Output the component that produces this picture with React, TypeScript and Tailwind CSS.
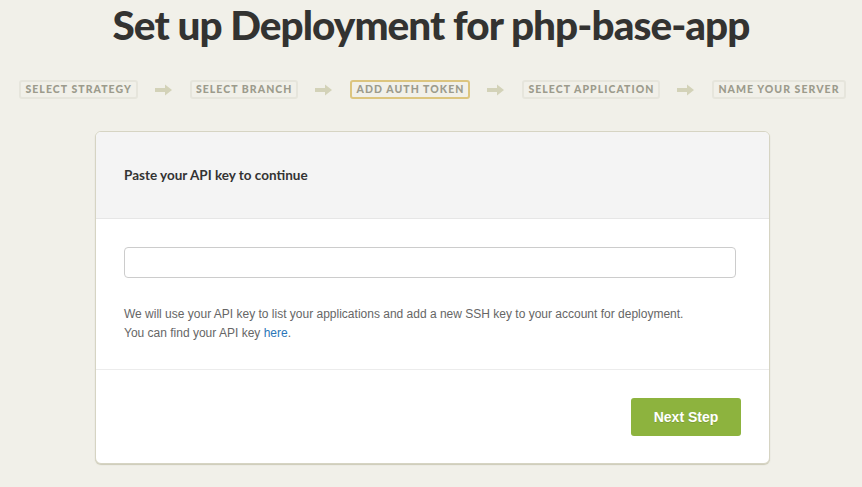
import React from "react";

const steps = [
  { label: "SELECT STRATEGY", active: false },
  { label: "SELECT BRANCH", active: false },
  { label: "ADD AUTH TOKEN", active: true },
  { label: "SELECT APPLICATION", active: false },
  { label: "NAME YOUR SERVER", active: false },
];

function Arrow() {
  return (
    <svg width="18" height="12" viewBox="0 0 18 12" className="shrink-0">
      <path d="M0 4 H10 V0.5 L17 6 L10 11.5 V8 H0 Z" fill="#d3d2b8" />
    </svg>
  );
}

export default function App() {
  return (
    <div
      className="min-h-[487px] w-full bg-[#f1f0e9] pt-[4px]"
      style={{ fontFamily: "Lato, 'Open Sans', sans-serif" }}
    >
      <h1 className="text-center text-[40.5px] font-black leading-[42px] tracking-[-0.95px] text-[#333331]">
        Set up Deployment for php-base-app
      </h1>
      <div className="mt-[34px] flex items-center justify-center gap-[17px] pl-[3px]">
        {steps.map((s, i) => (
          <React.Fragment key={s.label}>
            {i > 0 && <Arrow />}
            <div
              className={
                "flex h-[19px] items-center rounded-[3px] border-2 px-[4px] text-[10.5px] font-black tracking-[1.05px] text-[#9c9b8c] " +
                (s.active ? "border-[#dcc57f]" : "border-[#e6e5dc]")
              }
            >
              {s.label}
            </div>
          </React.Fragment>
        ))}
      </div>
      <div className="pl-[3px]">
        <div className="mx-auto mt-[32px] w-[675px] overflow-hidden rounded-[6px] border border-[#d6d4c3] bg-white shadow-[0_1px_1px_rgba(180,178,150,0.6)]">
          <div className="flex h-[87px] items-center border-b border-[#e6e6e6] bg-[#f4f4f4] px-[28px]">
            <span className="text-[13.5px] font-bold text-[#333]">Paste your API key to continue</span>
          </div>
          <div
            className="border-b border-[#ececec] px-[28px] pt-[28px] pb-[26px]"
            style={{ fontFamily: "'Liberation Sans', Arial, sans-serif" }}
          >
            <input
              type="text"
              className="block h-[31px] w-[612px] rounded-[4px] border border-[#cccccc] bg-white outline-none"
            />
            <p className="mt-[27px] text-[12px] leading-[19px] text-[#666]">
              We will use your API key to list your applications and add a new SSH key to your account for deployment.
              <br />
              You can find your API key <a className="text-[#2a76b8]">here</a>.
            </p>
          </div>
          <div className="flex justify-end pr-[28px] pt-[28px] pb-[27px]">
            <button
              className="h-[38px] w-[110px] rounded-[3px] bg-[#8db33e] text-[14px] font-bold text-white"
              style={{ fontFamily: "'Liberation Sans', Arial, sans-serif", textShadow: "0 1px 0 rgba(0,0,0,0.15)" }}
            >
              Next Step
            </button>
          </div>
        </div>
      </div>
    </div>
  );
}
